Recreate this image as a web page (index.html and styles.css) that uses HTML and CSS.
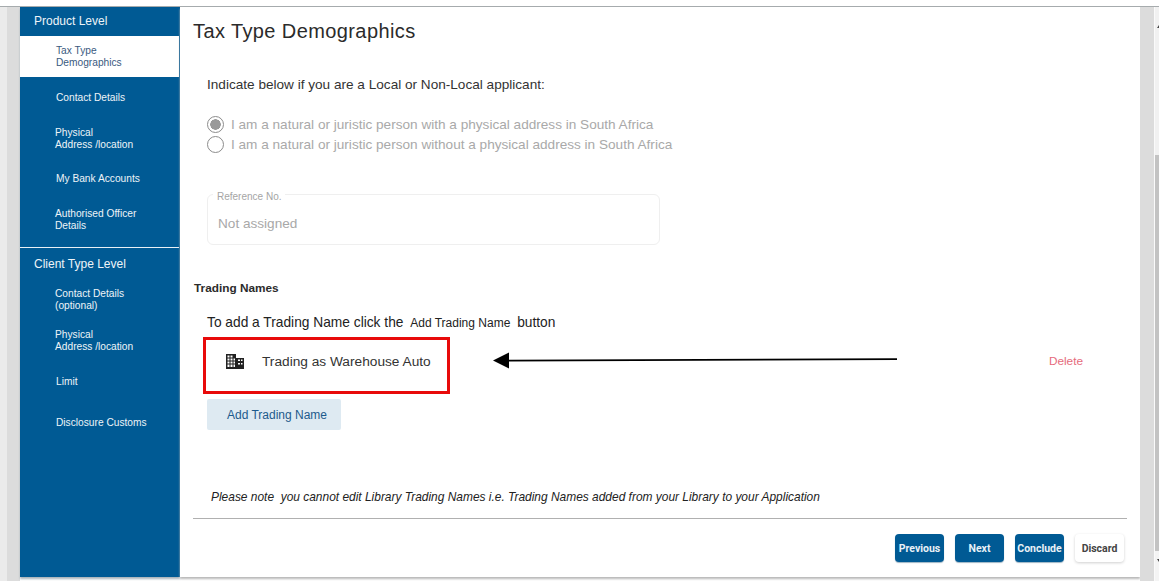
FILE: index.html
```html
<!DOCTYPE html>
<html lang="en">
<head>
<meta charset="utf-8">
<title>Tax Type Demographics</title>
<link rel="stylesheet" href="styles.css">
</head>
<body>
<div class="top-strip"></div>
<div class="frame">
  <div class="gutter-left"></div>
  <nav class="sidebar">
    <div class="nav-head nav-head-first">Product Level</div>
    <a class="nav-item nav-active h41">Tax Type<br>Demographics</a>
    <a class="nav-item h40">Contact Details</a>
    <a class="nav-item nav-tight h41">Physical<br>Address /location</a>
    <a class="nav-item h40">My Bank Accounts</a>
    <a class="nav-item nav-tight h42">Authorised Officer<br>Details</a>
    <div class="nav-rule"></div>
    <div class="nav-head">Client Type Level</div>
    <a class="nav-item nav-tight h42">Contact Details<br>(optional)</a>
    <a class="nav-item nav-tight nav-up h40">Physical<br>Address /location</a>
    <a class="nav-item nav-limit h42">Limit</a>
    <a class="nav-item h40">Disclosure Customs</a>
  </nav>
  <main class="main">
    <h1 class="title">Tax Type Demographics</h1>
    <p class="intro">Indicate below if you are a Local or Non-Local applicant:</p>
    <div class="radio-group">
      <div class="radio-row"><span class="radio radio-on"></span>I am a natural or juristic person with a physical address in South Africa</div>
      <div class="radio-row"><span class="radio"></span>I am a natural or juristic person without a physical address in South Africa</div>
    </div>
    <div class="ref-field">
      <span class="ref-label">Reference No.</span>
      <span class="ref-value">Not assigned</span>
    </div>
    <h2 class="section">Trading Names</h2>
    <p class="hint">To add a Trading Name click the <span class="hint-small">Add Trading Name</span> button</p>
    <div class="trade-row">
      <div class="trade-box">
        <svg class="trade-icon" viewBox="0 0 18 15" width="18" height="15" aria-hidden="true">
          <path fill="#222" d="M0 0h10v4h8v11H0zM1.500 1.500v2h2v-2zm3 0v2h2v-2zm-3 3v2h2v-2zm3 0v2h2v-2zm-3 3v2h2v-2zm3 0v2h2v-2zm3-3v2h1.500v-2zm-6 6v2.500h2v-2.500zm3 0v2.500h2v-2.500zm3-3v2h1.500v-2zm0 3v2.500h1.500v-2.500zM12 5.500V7h2V5.500zm3 0V7h1.500V5.500zM12 9v1.500h2V9zm3 0v1.500h1.500V9z"/>
        </svg>
        <span>Trading as Warehouse Auto</span>
      </div>
      <svg class="arrow" viewBox="0 0 405 18" width="405" height="18" aria-hidden="true">
        <path d="M0 9.500 16 1.500V17.500Z" fill="#000"/>
        <path d="M15 9.700 404 8.200" stroke="#000" stroke-width="1.700" fill="none"/>
      </svg>
      <a class="delete">Delete</a>
    </div>
    <button class="add-btn">Add Trading Name</button>
    <p class="note">Please note&nbsp; you cannot edit Library Trading Names i.e. Trading Names added from your Library to your Application</p>
    <div class="actions">
      <button class="btn btn-primary">Previous</button>
      <button class="btn btn-primary">Next</button>
      <button class="btn btn-primary">Conclude</button>
      <button class="btn btn-plain">Discard</button>
    </div>
  </main>
  <div class="gutter-right"></div>
  <div class="scrollbar">
    <div class="scroll-track"></div>
    <div class="scroll-thumb"></div>
    <div class="scroll-arrow"></div>
  </div>
</div>
</body>
</html>
```
FILE: styles.css
```css
* { box-sizing: border-box; }
html, body { margin: 0; height: 581px; overflow: hidden; background: #fff; }
body { font-family: "Liberation Sans", Arial, sans-serif; color: #222; }

.top-strip { height: 7px; background: #fff; border-bottom: 1px solid #a6abad; }

.frame { display: flex; height: 574px; }
.gutter-left { width: 20px; height: 574px; background: linear-gradient(90deg, #ebebeb 0 7px, #dcdcdc 7px); }
.sidebar { width: 160px; height: 570px; background: #005a94; color: #eef4f8; font-size: 10.2px; line-height: 12px; flex: none; box-shadow: 0 2px 2px #a9b3ba; }

.nav-head { height: 30px; padding: 2px 0 0 14px; display: flex; align-items: center; font-size: 12px; }
.nav-head-first { height: 29px; padding: 0 0 1px 14px; }
.nav-item { display: block; padding: 15px 0 0 36px; }
.nav-tight { padding: 10px 0 0 35px; }
.nav-up { padding-top: 9px; }
.nav-limit { padding-top: 16px; }
.nav-active { background: #fff; color: #3a5a80; margin-right: 1px; padding-top: 9px; }
.h40 { height: 40px; }
.h41 { height: 41px; }
.h42 { height: 42px; }
.nav-rule { height: 1px; margin: 7px 1px 0 0; background: #e8f0f6; }

.main { width: 960px; height: 570px; flex: none; padding: 0 13px; background: #fff; display: flex; flex-direction: column; box-shadow: 0 2px 2px #b9b9b9; }
.title { margin: 13px 0 0; font-size: 20px; font-weight: 400; line-height: 23px; color: #2b2b2b; letter-spacing: 0.4px; }
.intro { margin: 34px 0 0 14px; font-size: 13.6px; line-height: 16px; color: #333; }
.radio-group { margin: 21px 0 0 14px; color: #a9a9a9; font-size: 13.6px; }
.radio-row { display: flex; align-items: center; height: 20px; gap: 7px; }
.radio { width: 17px; height: 17px; border: 1.500px solid #8c8c8c; border-radius: 50%; flex: none; background: #fff; }
.radio-on { background: radial-gradient(circle, #9a9a9a 0 5px, #fff 5.500px); }

.ref-field { position: relative; width: 453px; height: 51px; margin: 40px 0 0 14px; border: 1px solid #efefef; border-radius: 6px; padding: 19px 0 0 10px; }
.ref-label { position: absolute; top: -4px; left: 5px; padding: 0 4px; background: #fff; font-size: 10px; line-height: 11px; color: #a5a5a5; }
.ref-value { font-size: 13.6px; line-height: 16px; color: #a8a8a8; }

.section { margin: 37px 0 0 1px; font-size: 11.8px; font-weight: 700; line-height: 12px; color: #2b2b2b; }
.hint { margin: 21px 0 0 14px; font-size: 13.75px; line-height: 16px; color: #222; }
.hint-small { font-size: 12px; margin: 0 3px; }

.trade-row { display: flex; align-items: center; height: 57px; margin: 6px 0 0 10px; }
.trade-box { display: flex; align-items: center; width: 247px; height: 57px; border: 3px solid #e80a0a; padding: 0 0 9px 20px; font-size: 13.7px; color: #333; }
.trade-icon { flex: none; margin-right: 18px; }
.arrow { margin: 0 0 11px 43px; flex: none; }
.delete { margin: 0 44px 10px auto; font-size: 11.8px; color: #e66a7c; }

.add-btn { align-self: flex-start; width: 134px; height: 31px; margin: 5px 0 0 14px; padding: 0 0 0 6px; border: 0; border-radius: 2px; background: #deeaf2; color: #1d5a8c; font: 12px "Liberation Sans", Arial, sans-serif; }

.note { margin: 61px 0 0 18px; font-size: 11.95px; line-height: 12px; font-style: italic; color: #222; }

.actions { display: flex; justify-content: flex-end; gap: 11px; margin-top: 15px; padding: 15px 3px 0 0; border-top: 1px solid #b0b0b0; }
.btn { width: 49px; height: 28px; border: 0; border-radius: 4px; padding: 0; font: 700 10.500px Roboto, "Liberation Sans", sans-serif; }
.btn-primary { background: #005a94; color: #e9f1f7; box-shadow: 0 1px 1px #9db4c4; }
.btn-plain { background: #fff; color: #444; box-shadow: 0 1px 3px #d0d0d0; }

.gutter-right { width: 14px; height: 574px; background: #dcdcdc; }
.scrollbar { width: 5px; height: 574px; display: flex; flex-direction: column; background: #f1f1f1; border-left: 1px solid #fafafa; }
.scroll-track { height: 148px; padding-top: 18px; background: #f1f1f1; }
.scroll-thumb { height: 396px; background: #c3c3c3; }
.scroll-arrow { flex: 1; padding-top: 8px; background: #f4f4f4; }
.scroll-track::after, .scroll-arrow::after { content: ""; display: block; width: 0; height: 0; margin-left: 2px; border-left: 2px solid transparent; border-right: 0 solid transparent; }
.scroll-track::after { border-bottom: 3px solid #444; }
.scroll-arrow::after { border-top: 3px solid #444; }
```
